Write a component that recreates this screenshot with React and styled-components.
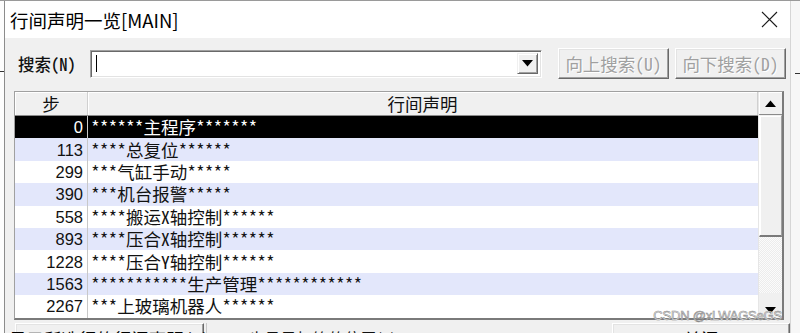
import React from 'react'
import styled, { createGlobalStyle } from 'styled-components'

const steps = [
  { step: 0, text: '******主程序*******' },
  { step: 113, text: '****总复位******' },
  { step: 299, text: '***气缸手动*****' },
  { step: 390, text: '***机台报警*****' },
  { step: 558, text: '****搬运X轴控制******' },
  { step: 893, text: '****压合X轴控制******' },
  { step: 1228, text: '****压合Y轴控制******' },
  { step: 1563, text: '***********生产管理************' },
  { step: 2267, text: '***上玻璃机器人******' },
]

const GlobalStyle = createGlobalStyle`
  html, body {
    margin: 0;
    padding: 0;
    overflow: hidden;
    background: #fafafa;
  }
  * {
    box-sizing: border-box;
  }
`

export default function App() {
  return (
    <>
      <GlobalStyle />
      <Page>
        <ParentEdge $line={70} />
        <Dialog>
          <TitleBar>
            <Title>行间声明一览[MAIN]</Title>
            <CloseButton aria-label="close">
              <svg width="17" height="17" viewBox="0 0 17 17">
                <path d="M1 1 L16 16 M16 1 L1 16" stroke="#1a1a1a" strokeWidth="1.1" fill="none" />
              </svg>
            </CloseButton>
          </TitleBar>
          <Client>
            <SearchRow>
              <Label>搜索(N)</Label>
              <Combo>
                <ComboInput>
                  <Caret />
                </ComboInput>
                <DropButton>
                  <svg width="11" height="7" viewBox="0 0 11 7">
                    <path d="M0 0 H11 L5.5 6.5 Z" fill="#000" />
                  </svg>
                </DropButton>
              </Combo>
              <ButtonGroup>
                <ClassicButton disabled>向上搜索(U)</ClassicButton>
                <ClassicButton disabled>向下搜索(D)</ClassicButton>
              </ButtonGroup>
            </SearchRow>

            <Grid>
              <Table>
                <HeaderRow>
                  <HeaderCell $w="73px">步</HeaderCell>
                  <HeaderCell>行间声明</HeaderCell>
                </HeaderRow>
                {steps.map(({ step, text }, i) => (
                  <Row key={step} $selected={i === 0} $alt={i % 2 === 1}>
                    <StepCell>{step}</StepCell>
                    <TextCell>{text}</TextCell>
                  </Row>
                ))}
              </Table>
              <ScrollBar>
                <ArrowButton $h={23}>
                  <svg width="11" height="7" viewBox="0 0 11 7">
                    <path d="M0 7 H11 L5.5 0.5 Z" fill="#000" />
                  </svg>
                </ArrowButton>
                <Thumb />
                <Track />
                <ArrowButton $h={25} $flat>
                  <svg width="11" height="7" viewBox="0 0 11 7">
                    <path d="M0 0 H11 L5.5 6.5 Z" fill="#000" />
                  </svg>
                </ArrowButton>
              </ScrollBar>
            </Grid>

            <BottomRow>
              <ClassicButton $w="189px">显示所选行的行间声明(S)</ClassicButton>
              <BottomLabel>一 步号是标签的位置(J)</BottomLabel>
              <Spacer />
              <ClassicButton $w="178px">关闭</ClassicButton>
            </BottomRow>
            <Watermark>CSDN @xLWAGSeGS</Watermark>
          </Client>
        </Dialog>
        <ParentEdge $line={72} $right />
      </Page>
    </>
  )
}

const Page = styled.div`
  display: flex;
  width: 800px;
  height: 333px;
  border-top: 1px solid #9a9a9a;
`

const ParentEdge = styled.div`
  position: relative;
  width: ${(p) => (p.$right ? '9px' : '4px')};
  background: ${(p) => (p.$right ? '#f7f7f7' : '#fdfdfd')};

  &::before {
    content: '';
    position: absolute;
    top: ${(p) => p.$line}px;
    left: ${(p) => (p.$right ? '4px' : '0')};
    right: 0;
    height: 1px;
    background: #333;
  }
`

const Dialog = styled.div`
  position: relative;
  width: 787px;
  display: flex;
  flex-direction: column;
  background: #f0f0f0;
  border-left: 1px solid #8c8c8c;
  border-right: 1px solid #d6d6d6;
`

const TitleBar = styled.div`
  height: 37px;
  display: flex;
  align-items: center;
  justify-content: space-between;
  padding: 0 12px 0 5px;
  background: #fff;
`

const Title = styled.span`
  font-family: 'Noto Sans CJK SC', 'Noto Sans', sans-serif;
  font-size: 18.5px;
  color: #000;
`

const CloseButton = styled.div`
  width: 17px;
  height: 17px;
  display: flex;
`

const Client = styled.div`
  flex: 1;
  display: flex;
  flex-direction: column;
  padding: 10px 0 0 9px;
  overflow: hidden;
`

const SearchRow = styled.div`
  display: flex;
  align-items: center;
  height: 31px;
`

const Label = styled.span`
  width: 76px;
  padding-left: 4px;
  font-family: 'Noto Sans CJK SC', sans-serif;
  font-size: 16.5px;
  font-weight: 500;
  color: #111;
  font-feature-settings: 'hwid';
`

const Combo = styled.div`
  width: 452px;
  height: 28px;
  display: flex;
  align-items: center;
  padding: 2px 3px 2px 2px;
  background: #fff;
  border-top: 1px solid #a0a0a0;
  border-left: 1px solid #a0a0a0;
  border-bottom: 1px solid #fff;
  border-right: 1px solid #fff;
  box-shadow: inset 1px 1px 0 #696969, inset -1px -1px 0 #e3e3e3;
`

const ComboInput = styled.div`
  flex: 1;
  height: 100%;
  display: flex;
  align-items: center;
  padding-left: 3px;
`

const Caret = styled.span`
  width: 1px;
  height: 17px;
  background: #000;
`

const DropButton = styled.div`
  width: 21px;
  height: 21px;
  display: flex;
  align-items: center;
  justify-content: center;
  background: #f0f0f0;
  border-top: 1px solid #f0f0f0;
  border-left: 1px solid #f0f0f0;
  border-right: 1px solid #696969;
  border-bottom: 1px solid #696969;
  box-shadow: inset 1px 1px 0 #fff, inset -1px -1px 0 #a0a0a0;
`

const ButtonGroup = styled.div`
  display: flex;
  gap: 6px;
  margin-left: 16px;
`

const ClassicButton = styled.div`
  width: ${(p) => p.$w || '111px'};
  height: 31px;
  display: flex;
  align-items: center;
  justify-content: center;
  font-family: 'Noto Sans CJK SC', sans-serif;
  font-size: 17.5px;
  font-feature-settings: 'hwid';
  color: ${(p) => (p.disabled ? '#a0a0a0' : '#000')};
  text-shadow: ${(p) => (p.disabled ? '1px 1px 0 #fff' : 'none')};
  background: #f0f0f0;
  border-top: 1px solid #fff;
  border-left: 1px solid #fff;
  border-right: 1px solid #696969;
  border-bottom: 1px solid #696969;
  box-shadow: inset -1px -1px 0 #a0a0a0, inset 1px 1px 0 #e3e3e3;
  white-space: nowrap;
`

const Grid = styled.div`
  margin-top: 12px;
  width: 770px;
  height: 230px;
  display: flex;
  border-top: 1px solid #a0a0a0;
  border-left: 1px solid #a0a0a0;
  border-right: 2px solid #7a7a7a;
  border-bottom: 2px solid #7a7a7a;
  background: #fff;
`

const Table = styled.div`
  flex: 1;
  display: flex;
  flex-direction: column;
`

const HeaderRow = styled.div`
  height: 24px;
  display: flex;
  background: #f0f0f0;
  border-bottom: 1px solid #8a8a8a;
`

const HeaderCell = styled.div`
  ${(p) => (p.$w ? `width: ${p.$w};` : 'flex: 1;')}
  display: flex;
  align-items: center;
  justify-content: center;
  font-family: 'Noto Sans CJK SC', sans-serif;
  font-size: 17.5px;
  line-height: 1;
  color: #111;
  border-right: 1px solid #d0d0d0;
  box-shadow: inset 1px 1px 0 #fff;
`

const Row = styled.div`
  height: 22.4px;
  display: flex;
  align-items: center;
  background: ${(p) => (p.$selected ? '#000' : p.$alt ? '#e3e7fb' : '#fff')};
  color: ${(p) => (p.$selected ? '#fff' : '#111')};
`

const StepCell = styled.div`
  width: 73px;
  height: 100%;
  display: flex;
  align-items: center;
  justify-content: flex-end;
  padding-right: 4px;
  font-family: 'Liberation Sans', 'DejaVu Sans', sans-serif;
  font-size: 16.5px;
  line-height: 18px;
  border-right: 1px solid #c8c8c8;
`

const TextCell = styled.div`
  flex: 1;
  padding-left: 3px;
  font-family: 'Noto Sans CJK SC', sans-serif;
  font-size: 17.5px;
  font-feature-settings: 'hwid';
  line-height: 20px;
  white-space: nowrap;
`

const ScrollBar = styled.div`
  width: 24px;
  display: flex;
  flex-direction: column;
  background: #f0f0f0;
  border-left: 1px solid #e6e6e6;
`

const ArrowButton = styled.div`
  height: ${(p) => p.$h}px;
  display: flex;
  align-items: ${(p) => (p.$flat ? 'flex-end' : 'center')};
  padding-bottom: ${(p) => (p.$flat ? '4px' : '0')};
  justify-content: center;
  background: #f0f0f0;
  border-bottom: ${(p) => (p.$flat ? 'none' : '1px solid #8a8a8a')};
  box-shadow: ${(p) => (p.$flat ? 'none' : 'inset 1px 1px 0 #fff')};
`

const Thumb = styled.div`
  height: 122px;
  background: #f0f0f0;
  border-top: 1px solid #f0f0f0;
  border-left: 1px solid #fff;
  border-right: 1px solid #a0a0a0;
  border-bottom: 2px solid #7a7a7a;
  box-shadow: inset 1px 1px 0 #fff;
`

const Track = styled.div`
  flex: 1;
  background-color: #f6f6f6;
  background-image: repeating-conic-gradient(#ececec 0 25%, #fbfbfb 0 50%);
  background-size: 2px 2px;
`

const BottomRow = styled.div`
  display: flex;
  align-items: flex-start;
  margin-top: 3px;
  padding-left: 1px;
`

const BottomLabel = styled.div`
  height: 31px;
  display: flex;
  align-items: center;
  padding-left: 22px;
  font-family: 'Noto Sans CJK SC', sans-serif;
  font-size: 16px;
  color: #111;
  border-left: 1px solid #c8c8c8;
  margin-left: 2px;
`

const Spacer = styled.div`
  flex: 1;
`

const Watermark = styled.div`
  position: absolute;
  right: 8px;
  bottom: 10px;
  font-family: 'Liberation Sans', sans-serif;
  font-size: 13px;
  letter-spacing: -0.2px;
  color: #fff;
  -webkit-text-stroke: 0.6px #8a8a8a;
`
